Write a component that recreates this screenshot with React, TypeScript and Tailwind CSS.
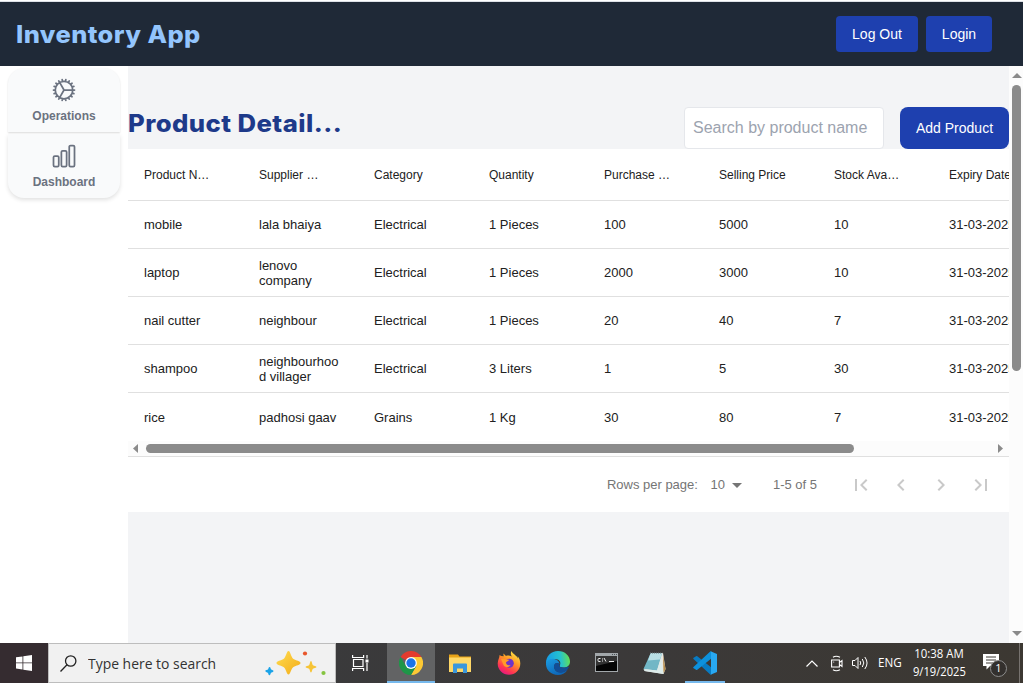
import React from "react";
import { HiOutlineChartBar, HiOutlineCog } from "react-icons/hi2";
import { MdArrowDropDown, MdChevronLeft, MdChevronRight, MdFirstPage, MdLastPage } from "react-icons/md";

const headers = ["Product Name", "Supplier Name", "Category", "Quantity", "Purchase Price", "Selling Price", "Stock Available", "Expiry Date"];

const rows: string[][] = [
  ["mobile", "lala bhaiya", "Electrical", "1 Pieces", "100", "5000", "10", "31-03-2025"],
  ["laptop", "lenovo company", "Electrical", "1 Pieces", "2000", "3000", "10", "31-03-2025"],
  ["nail cutter", "neighbour", "Electrical", "1 Pieces", "20", "40", "7", "31-03-2025"],
  ["shampoo", "neighbourhood villager", "Electrical", "3 Liters", "1", "5", "30", "31-03-2025"],
  ["rice", "padhosi gaav", "Grains", "1 Kg", "30", "80", "7", "31-03-2025"],
];

function Header() {
  return (
    <header className="flex h-16 shrink-0 items-center justify-between bg-[#1f2937] pr-[31px] pl-4">
      <h1 className="mt-0.5 origin-left scale-x-[1.06] font-['Inter',sans-serif] text-2xl font-extrabold tracking-[0.4px] whitespace-nowrap text-[#93c5fd]">Inventory App</h1>
      <div className="flex gap-2 text-sm text-white">
        <button className="h-9 w-[82px] rounded bg-[#1e40af]">Log Out</button>
        <button className="h-9 w-[66px] rounded bg-[#1e40af]">Login</button>
      </div>
    </header>
  );
}

function Sidebar() {
  return (
    <aside className="w-32 shrink-0 bg-white px-2 pt-0.5 text-xs font-bold text-[#6b7280]">
      <div className="flex h-16 flex-col items-center rounded-t-2xl bg-[#f9fafb] pt-2 shadow-[0_1px_2px_rgba(0,0,0,0.14)]">
        <HiOutlineCog className="size-7" />
        <span className="mt-1 leading-4">Operations</span>
      </div>
      <div className="mt-0.5 flex h-16 flex-col items-center rounded-b-2xl bg-[#f9fafb] pt-2 shadow-[0_2px_4px_rgba(0,0,0,0.12)]">
        <HiOutlineChartBar className="size-7" />
        <span className="mt-1 leading-4">Dashboard</span>
      </div>
    </aside>
  );
}

function ProductTable() {
  return (
    <section className="bg-white text-[#212121]">
      <div className="overflow-hidden">
        <div className="flex h-[52px] w-[920px] items-center border-b border-[#e0e0e0] text-xs">
          {headers.map((h) => (
            <div key={h} className="w-[115px] shrink-0 px-4">
              <div className={h === "Expiry Date" || h === "Selling Price" ? "whitespace-nowrap" : "w-[67px] truncate"}>{h}</div>
            </div>
          ))}
        </div>
        {rows.map((row, i) => (
          <div key={row[0]} className={`flex h-12 w-[920px] items-center text-[13px] leading-[15px] ${i < 4 ? "border-b border-[#e0e0e0]" : "pt-px"}`}>
            {row.map((cell, j) => (
              <div key={j} className="w-[115px] shrink-0 px-4 break-words">{cell}</div>
            ))}
          </div>
        ))}
      </div>
      <div className="flex h-[15px] items-center bg-[#fcfcfc] pr-1.5 pl-[5px]">
        <svg width="5" height="9" viewBox="0 0 5 9"><path d="M5 0v9L0 4.500z" fill="#8b8b8b" /></svg>
        <div className="ml-2 h-[9px] w-[708px] rounded-full bg-[#8b8b8b]" />
        <svg className="ml-auto" width="5" height="9" viewBox="0 0 5 9"><path d="M0 0v9l5-4.500z" fill="#8b8b8b" /></svg>
      </div>
      <div className="flex h-14 items-center justify-end border-t border-[#e0e0e0] pr-2 text-[13px] text-[#757575]">
        <span>Rows per page:</span>
        <span className="ml-[12.500px]">10</span>
        <MdArrowDropDown className="size-6" />
        <span className="mr-6 ml-6">1-5 of 5</span>
        <div className="flex text-[#c9c9c9]">
          {[MdFirstPage, MdChevronLeft, MdChevronRight, MdLastPage].map((Icon, i) => (
            <button key={i} className="flex size-10 items-center justify-center"><Icon className="size-6" /></button>
          ))}
        </div>
      </div>
    </section>
  );
}

function VerticalScrollbar() {
  return (
    <div className="flex w-3.5 shrink-0 flex-col items-center bg-[#fcfcfc] pt-[7px] pb-[7px]">
      <svg className="ml-px" width="10" height="5" viewBox="0 0 10 5"><path d="M5 0l5 5H0z" fill="#8b8b8b" /></svg>
      <div className="mt-[7px] ml-px h-[286px] w-[9px] rounded-full bg-[#8b8b8b]" />
      <svg className="mt-auto ml-px" width="10" height="5" viewBox="0 0 10 5"><path d="M0 0h10L5 5z" fill="#8b8b8b" /></svg>
    </div>
  );
}

function Sparkles() {
  return (
    <svg width="64" height="28" viewBox="0 0 64 28">
      <defs>
        <linearGradient id="gold" x1="0" y1="0" x2="1" y2="1">
          <stop offset="0" stopColor="#ffdc50" />
          <stop offset="1" stopColor="#f3ac18" />
        </linearGradient>
      </defs>
      <path d="M24.500 1C26.500 1 27 7.500 29.500 9s7 2 7 4-4.500 2.500-7 4-3 7.500-5 7.500-2.500-6-5-7.500-7-2-7-4 4.500-2.500 7-4 3-8 5-8z" fill="url(#gold)" />
      <path d="M47 11c1 0 1 3.500 2 4.200s3.500.8 3.500 1.800-2.500 1.100-3.500 1.800-1 3.700-2 3.700-1-3-2-3.700-3.500-.8-3.500-1.800 2.500-1.100 3.500-1.800 1-4.200 2-4.200z" fill="#f6c437" />
      <path d="M5.500 17c1.200 0 1 2 1.700 2.600s2.500.6 2.300 1.700-1.900.9-2.500 1.500-.5 2.700-1.700 2.500-.8-2-1.500-2.500-2.700-.9-2.500-2 2.100-.7 2.700-1.300.5-2.500 1.500-2.500z" fill="#1ba3e8" />
      <circle cx="41" cy="3.500" r="2.100" fill="#e8572c" />
      <circle cx="59.500" cy="23" r="2.100" fill="#85c440" />
    </svg>
  );
}

function ChromeIcon() {
  return (
    <svg width="24" height="24" viewBox="0 0 24 24">
      <path d="M12 12L1.600 6A12 12 0 0 1 22.400 6z" fill="#e33b2e" />
      <path d="M12 12V6h10.400A12 12 0 0 1 12 24l5.200-9z" fill="#fcc934" />
      <path d="M1.600 6A12 12 0 0 0 12 24l5.200-9L12 12l-5.200 3z" fill="#1e9648" />
      <circle cx="12" cy="12" r="5.900" fill="#fff" />
      <circle cx="12" cy="12" r="4.700" fill="#1a73e8" />
    </svg>
  );
}

function FolderIcon() {
  return (
    <svg width="22" height="19" viewBox="0 0 22 19">
      <path d="M0 .5h9l1.500 2H22V18H0z" fill="#e8a317" />
      <path d="M0 3.500h22V18H0z" fill="#ffd867" />
      <path d="M4 19v-8.500q0-1 1-1h12q1 0 1 1V19h-4v-4.500H8V19z" fill="#3b97dc" />
    </svg>
  );
}

function FirefoxIcon() {
  return (
    <svg width="24" height="24" viewBox="0 0 24 24">
      <defs>
        <linearGradient id="fox" x1=".8" y1="0" x2=".25" y2="1">
          <stop offset="0" stopColor="#fff04a" />
          <stop offset=".4" stopColor="#ff9a25" />
          <stop offset=".75" stopColor="#ff3750" />
          <stop offset="1" stopColor="#e31587" />
        </linearGradient>
      </defs>
      <path d="M14.500 0c-1 2-1 4 .5 5.500-2-1-4.500-1.300-6-.6L6.500 2.500c-.2 1 0 1.800.3 2.700L4.200 5 2.500 4C2.800 7 .8 8.500.7 12.500a11.300 11.300 0 0 0 22.600 0c0-3-1.200-5.500-2.600-7.200l.3 2.200C19.500 4 15.500 3 14.500 0z" fill="url(#fox)" />
      <circle cx="12.300" cy="12.300" r="4.500" fill="#6d35c9" />
      <path d="M4 8c3-1 5 .5 8 .8-.3 1.500-2.500 1.600-3 2.700 0 2 2 3.500 4.500 2.500-1 2.700-5.500 3-7 0z" fill="#ff9b28" />
    </svg>
  );
}

function EdgeIcon() {
  return (
    <svg width="24" height="24" viewBox="0 0 24 24">
      <defs>
        <linearGradient id="edgeTop" x1="0" y1=".5" x2="1" y2=".4">
          <stop offset="0" stopColor="#159be8" />
          <stop offset=".6" stopColor="#25c2cf" />
          <stop offset="1" stopColor="#65e04f" />
        </linearGradient>
        <linearGradient id="edgeLeft" x1="0" y1="0" x2=".6" y2="1">
          <stop offset="0" stopColor="#1b9de2" />
          <stop offset="1" stopColor="#0e65b7" />
        </linearGradient>
      </defs>
      <path d="M0 12C0 5 5 0 12 0s12 5 12 10.500c0 4-3 6-6.500 6-3 0-4.500-1-3.600-2.300C15.500 11 13 8 9 8c-4 0-8 2-9 6z" fill="url(#edgeTop)" />
      <path d="M0 12.500C1 9 5 7 9 8.200c3 .9 4.500 2.800 4.600 5-3-3-6.500.2-5.300 4.100C9.500 21.500 15 23 21.500 19 19 22.500 16 24 12 24 4.500 24-.3 18.500 0 12.500z" fill="url(#edgeLeft)" />
      <path d="M8.300 17.300C7 13.500 10 10 13.600 13.200c-.9 2 .4 3.300 3.900 3.300 2 0 3.600-.4 4.800-.8.4-.1.7.4.5.8-4 7.500-13 6.500-14.500.8z" fill="#124e96" />
    </svg>
  );
}

function TerminalIcon() {
  return (
    <svg width="23" height="19" viewBox="0 0 23 19">
      <path d="M0 0h23v19H0z" fill="#a2a7aa" />
      <path d="M1 3h21v15H1z" fill="#050505" />
      <path d="M1 3h21v5L1 13z" fill="#333" />
      <path d="M17 1.500h1m1 0h1m1 0h1" stroke="#4c5357" />
      <path d="M5.500 5.500H4q-1 0-1 1v1q0 1 1 1h1.500M7.500 5.500v1m0 1v1M9 5l2 3.500M14 8.500h5" fill="none" stroke="#eee" />
    </svg>
  );
}

function NotepadIcon() {
  return (
    <svg width="23" height="22" viewBox="0 0 23 22">
      <path d="M8 1h12l2.500 16-2 5-19-3z" fill="#e8e6df" />
      <path d="M20 3l2.500 14-2 4.500z" fill="#b48b4b" />
      <path d="M7.500 1.500H19l-5 17L.5 17z" fill="#72b7c6" />
      <path d="M7.500 1.500H19l-2 6-12 1z" fill="#b9dfe5" />
      <path d="M7 1h12.500" stroke="#68777b" strokeDasharray="1 1" />
      <path d="M.5 17l13.500 1.500L18 6l2.500 16L1.500 19z" fill="#dcebea" />
    </svg>
  );
}

function CodeIcon() {
  return (
    <svg width="24" height="24" viewBox="0 0 24 24">
      <path d="M1.500 6.200 3 5.200q.7-.4 1.300.1L19 17v6l-1.500.7L.5 8q-.7-.8.100-1.300z" fill="#087bc2" />
      <path d="M1.500 17.800 3 18.800q.7.4 1.300-.1L19 7V1l-1.500-.7L.5 16q-.7.8.100 1.300z" fill="#0d91dc" />
      <path d="M17.500.3 24 3v18l-6.500 2.700q.5-.2.500-1.200v-21q0-1-.5-1.200z" fill="#28a8f2" />
    </svg>
  );
}

function Taskbar() {
  return (
    <footer className="flex h-10 shrink-0 bg-gradient-to-r from-[#393b3e] via-[#3b3939] via-60% to-[#3c3832] font-['Open_Sans',sans-serif] text-white">
      <div className="flex w-12 items-center justify-center bg-[#352c30]">
        <svg width="16" height="16" viewBox="0 0 16 16"><path d="M0 2.300 6.500 1.400v6.100H0zM7.300 1.300 16 0v7.500H7.300zM0 8.300h6.500v6.200L0 13.600zM7.300 8.300H16V16l-8.700-1.300z" fill="#fff" /></svg>
      </div>
      <div className="flex w-72 items-center border border-[#bdbdbd] bg-[#f1f1f1] pl-[11px] text-[#333]">
        <svg width="17" height="17" viewBox="0 0 17 17" fill="none" stroke="#222" strokeWidth="1.300"><circle cx="10.700" cy="6" r="5.200" /><path d="M7 9.800.5 16.500" /></svg>
        <span className="mt-px ml-[11px] w-[129px] text-[14.500px] leading-5 whitespace-nowrap"><span className="inline-block origin-left scale-x-[.96]">Type here to search</span></span>
        <div className="mt-0.5 ml-[47px]"><Sparkles /></div>
      </div>
      <div className="flex w-[51px] items-center justify-center pr-0.5">
        <svg width="17" height="16" viewBox="0 0 17 16" fill="none" stroke="#fff" strokeWidth="1.200"><path d="M.6 0v2.500h11V0M1.500 4.500h9.500v7H1.500zM.6 16v-2.500h11V16M15 0v3.500M15 8v8" /><path d="M13.500 4.500h3v3h-3z" fill="#fff" stroke="none" /></svg>
      </div>
      <div className="flex w-12 items-center justify-center border-b-2 border-[#76b9ed] bg-[#626364] pt-0.5"><ChromeIcon /></div>
      <div className="flex w-[49px] items-center justify-center"><FolderIcon /></div>
      <div className="flex w-[49px] items-center justify-center"><FirefoxIcon /></div>
      <div className="flex w-[49px] items-center justify-center"><EdgeIcon /></div>
      <div className="flex w-[49px] items-center justify-center pr-px pb-px"><TerminalIcon /></div>
      <div className="flex w-[49px] items-center justify-center pr-0.5"><NotepadIcon /></div>
      <div className="ml-[5px] flex w-10 items-center justify-center border-b-2 border-[#76b9ed] pt-0.5"><CodeIcon /></div>
      <div className="ml-auto flex items-center">
        <svg width="12" height="7" viewBox="0 0 12 7" fill="none" stroke="#fff" strokeWidth="1.200"><path d="M.5 6.500 6 1l5.500 5.500" /></svg>
        <svg className="ml-[13px]" width="12" height="17" viewBox="0 0 12 17" fill="none" stroke="#fff" strokeWidth="1.100"><path d="M.6 5h7.800v7H.6zM8.400 7.500l2.600-2v6l-2.600-2M2 2.200q3-2 7 0M2 14.800q3 2 7 0" /><circle cx="2.700" cy="7" r=".6" fill="#fff" stroke="none" /></svg>
        <svg className="ml-[9px]" width="17" height="14" viewBox="0 0 17 14" fill="none" stroke="#fff"><path d="M.5 4.500H3l3-3v11l-3-3H.5zM8 5q1.500 2 0 4M10.300 3q3 4 0 8M12.800 1q4.500 6 0 12" /></svg>
        <span className="ml-[9px] w-[23px] text-[12px]"><span className="inline-block origin-left scale-x-[.97]">ENG</span></span>
        <div className="ml-3 flex w-[53px] flex-col items-center text-[12px] leading-[18px] whitespace-nowrap">
          <span className="scale-x-[.95]">10:38 AM</span>
          <span className="scale-x-[.93]">9/19/2025</span>
        </div>
        <div className="relative mt-[5px] ml-[17px] h-[25px] w-[25px]">
          <svg width="16" height="17" viewBox="0 0 16 17"><path d="M0 1h16v12H7l-3.500 3.500V13H0z" fill="#fff" /><path d="M3 4h10M3 7h10M3 10h7" stroke="#3c3832" /></svg>
          <span className="absolute top-[7px] left-[7px] flex size-[17px] items-center justify-center rounded-full border border-[#8d8d8d] bg-[#33302d] text-[11px]">1</span>
        </div>
        <div className="mr-[3px] ml-[11px] h-10 w-px bg-[#77736f]" />
      </div>
    </footer>
  );
}

export default function App() {
  return (
    <div className="flex h-[683px] w-[1023px] flex-col overflow-hidden bg-white font-['Liberation_Sans',Arial,sans-serif]">
      <div className="h-0.5 shrink-0 border-b border-[#dde1e6] bg-white" />
      <Header />
      <div className="flex min-h-0 flex-1">
        <Sidebar />
        <main className="w-[881px] shrink-0 overflow-hidden bg-[#f3f4f6]">
          <div className="mt-[41px] flex h-[42px] items-center">
            <h2 className="w-[216px] text-2xl leading-8 font-extrabold tracking-[0.4px] whitespace-nowrap text-[#1e3a8a]"><span className="inline-block origin-left scale-x-[1.07] -translate-y-1 font-['Inter',sans-serif]">Product Detail...</span></h2>
            <input placeholder="Search by product name" className="ml-auto h-[42px] w-[200px] rounded border border-[#e5e7eb] bg-white px-2 text-base placeholder:text-[#9ca3af]" />
            <button className="ml-4 h-[42px] w-[109px] rounded-lg bg-[#1e40af] text-sm text-white">Add Product</button>
          </div>
          <ProductTable />
        </main>
        <VerticalScrollbar />
      </div>
      <Taskbar />
    </div>
  );
}
